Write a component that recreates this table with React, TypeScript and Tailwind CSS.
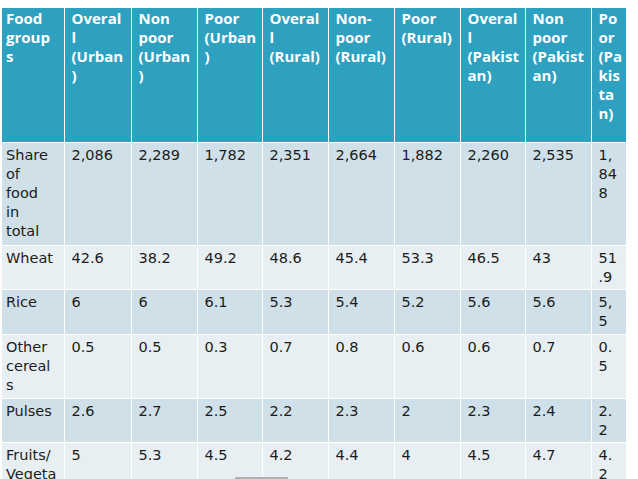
import React from 'react';

const widths = [62, 67, 66, 65, 66, 66, 66, 65, 66, 35];

const header: string[][] = [
  ['Food', 'group', 's'],
  ['Overal', 'l', '(Urban', ')'],
  ['Non', 'poor', '(Urban', ')'],
  ['Poor', '(Urban', ')'],
  ['Overal', 'l', '(Rural)'],
  ['Non-', 'poor', '(Rural)'],
  ['Poor', '(Rural)'],
  ['Overal', 'l', '(Pakist', 'an)'],
  ['Non', 'poor', '(Pakist', 'an)'],
  ['Po', 'or', '(Pa', 'kis', 'ta', 'n)'],
];

type Row = { h: string; dark: boolean; cells: string[][] };

const rows: Row[] = [
  {
    h: 'h-[103px]',
    dark: true,
    cells: [['Share', 'of', 'food', 'in', 'total'], ['2,086'], ['2,289'], ['1,782'], ['2,351'], ['2,664'], ['1,882'], ['2,260'], ['2,535'], ['1,', '84', '8']],
  },
  {
    h: 'h-[44px]',
    dark: false,
    cells: [['Wheat'], ['42.6'], ['38.2'], ['49.2'], ['48.6'], ['45.4'], ['53.3'], ['46.5'], ['43'], ['51', '.9']],
  },
  {
    h: 'h-[45px]',
    dark: true,
    cells: [['Rice'], ['6'], ['6'], ['6.1'], ['5.3'], ['5.4'], ['5.2'], ['5.6'], ['5.6'], ['5,', '5']],
  },
  {
    h: 'h-[64px]',
    dark: false,
    cells: [['Other', 'cereal', 's'], ['0.5'], ['0.5'], ['0.3'], ['0.7'], ['0.8'], ['0.6'], ['0.6'], ['0.7'], ['0.', '5']],
  },
  {
    h: 'h-[44px]',
    dark: true,
    cells: [['Pulses'], ['2.6'], ['2.7'], ['2.5'], ['2.2'], ['2.3'], ['2'], ['2.3'], ['2.4'], ['2.', '2']],
  },
  {
    h: 'h-[60px]',
    dark: false,
    cells: [['Fruits/', 'Vegeta', 'bles'], ['5'], ['5.3'], ['4.5'], ['4.2'], ['4.4'], ['4'], ['4.5'], ['4.7'], ['4.', '2']],
  },
];

const Lines = ({ lines }: { lines: string[] }) => (
  <>
    {lines.map((l, i) => (
      <div key={i} className="whitespace-nowrap">
        {l}
      </div>
    ))}
  </>
);

export default function App() {
  return (
    <div className="relative h-[479px] w-[638px] overflow-hidden bg-white">
      <table className="ml-[2px] mt-[8px] w-[624px] table-fixed border-collapse">
        <colgroup>
          {widths.map((w, i) => (
            <col key={i} style={{ width: w }} />
          ))}
        </colgroup>
        <thead>
          <tr>
            {header.map((c, i) => (
              <th
                key={i}
                className={`h-[134px] border-[1.5px] border-t-0 border-white bg-[#2ea0c0] align-top text-left font-['Open_Sans',sans-serif] text-[15px] font-bold leading-[19px] text-white pt-[1px] ${i === 0 ? 'pl-[4px] border-l-0' : 'pl-[7px]'}`}
              >
                <Lines lines={c} />
              </th>
            ))}
          </tr>
        </thead>
        <tbody>
          {rows.map((r, ri) => (
            <tr key={ri} className={r.dark ? 'bg-[#cfe0e8]' : 'bg-[#e8eff2]'}>
              {r.cells.map((c, i) => (
                <td
                  key={i}
                  className={`${r.h} border-[1.5px] border-white align-top font-['DejaVu_Sans',sans-serif] text-[14.5px] leading-[19px] text-[#1c1c1c] pt-[3px] ${i === 0 ? 'pl-[4px] border-l-0' : 'pl-[7px]'}`}
                >
                  <Lines lines={c} />
                </td>
              ))}
            </tr>
          ))}
        </tbody>
      </table>
      <div className="absolute left-[235px] top-[477px] h-[2px] w-[53px] bg-[#b0b0b0]" />
    </div>
  );
}
